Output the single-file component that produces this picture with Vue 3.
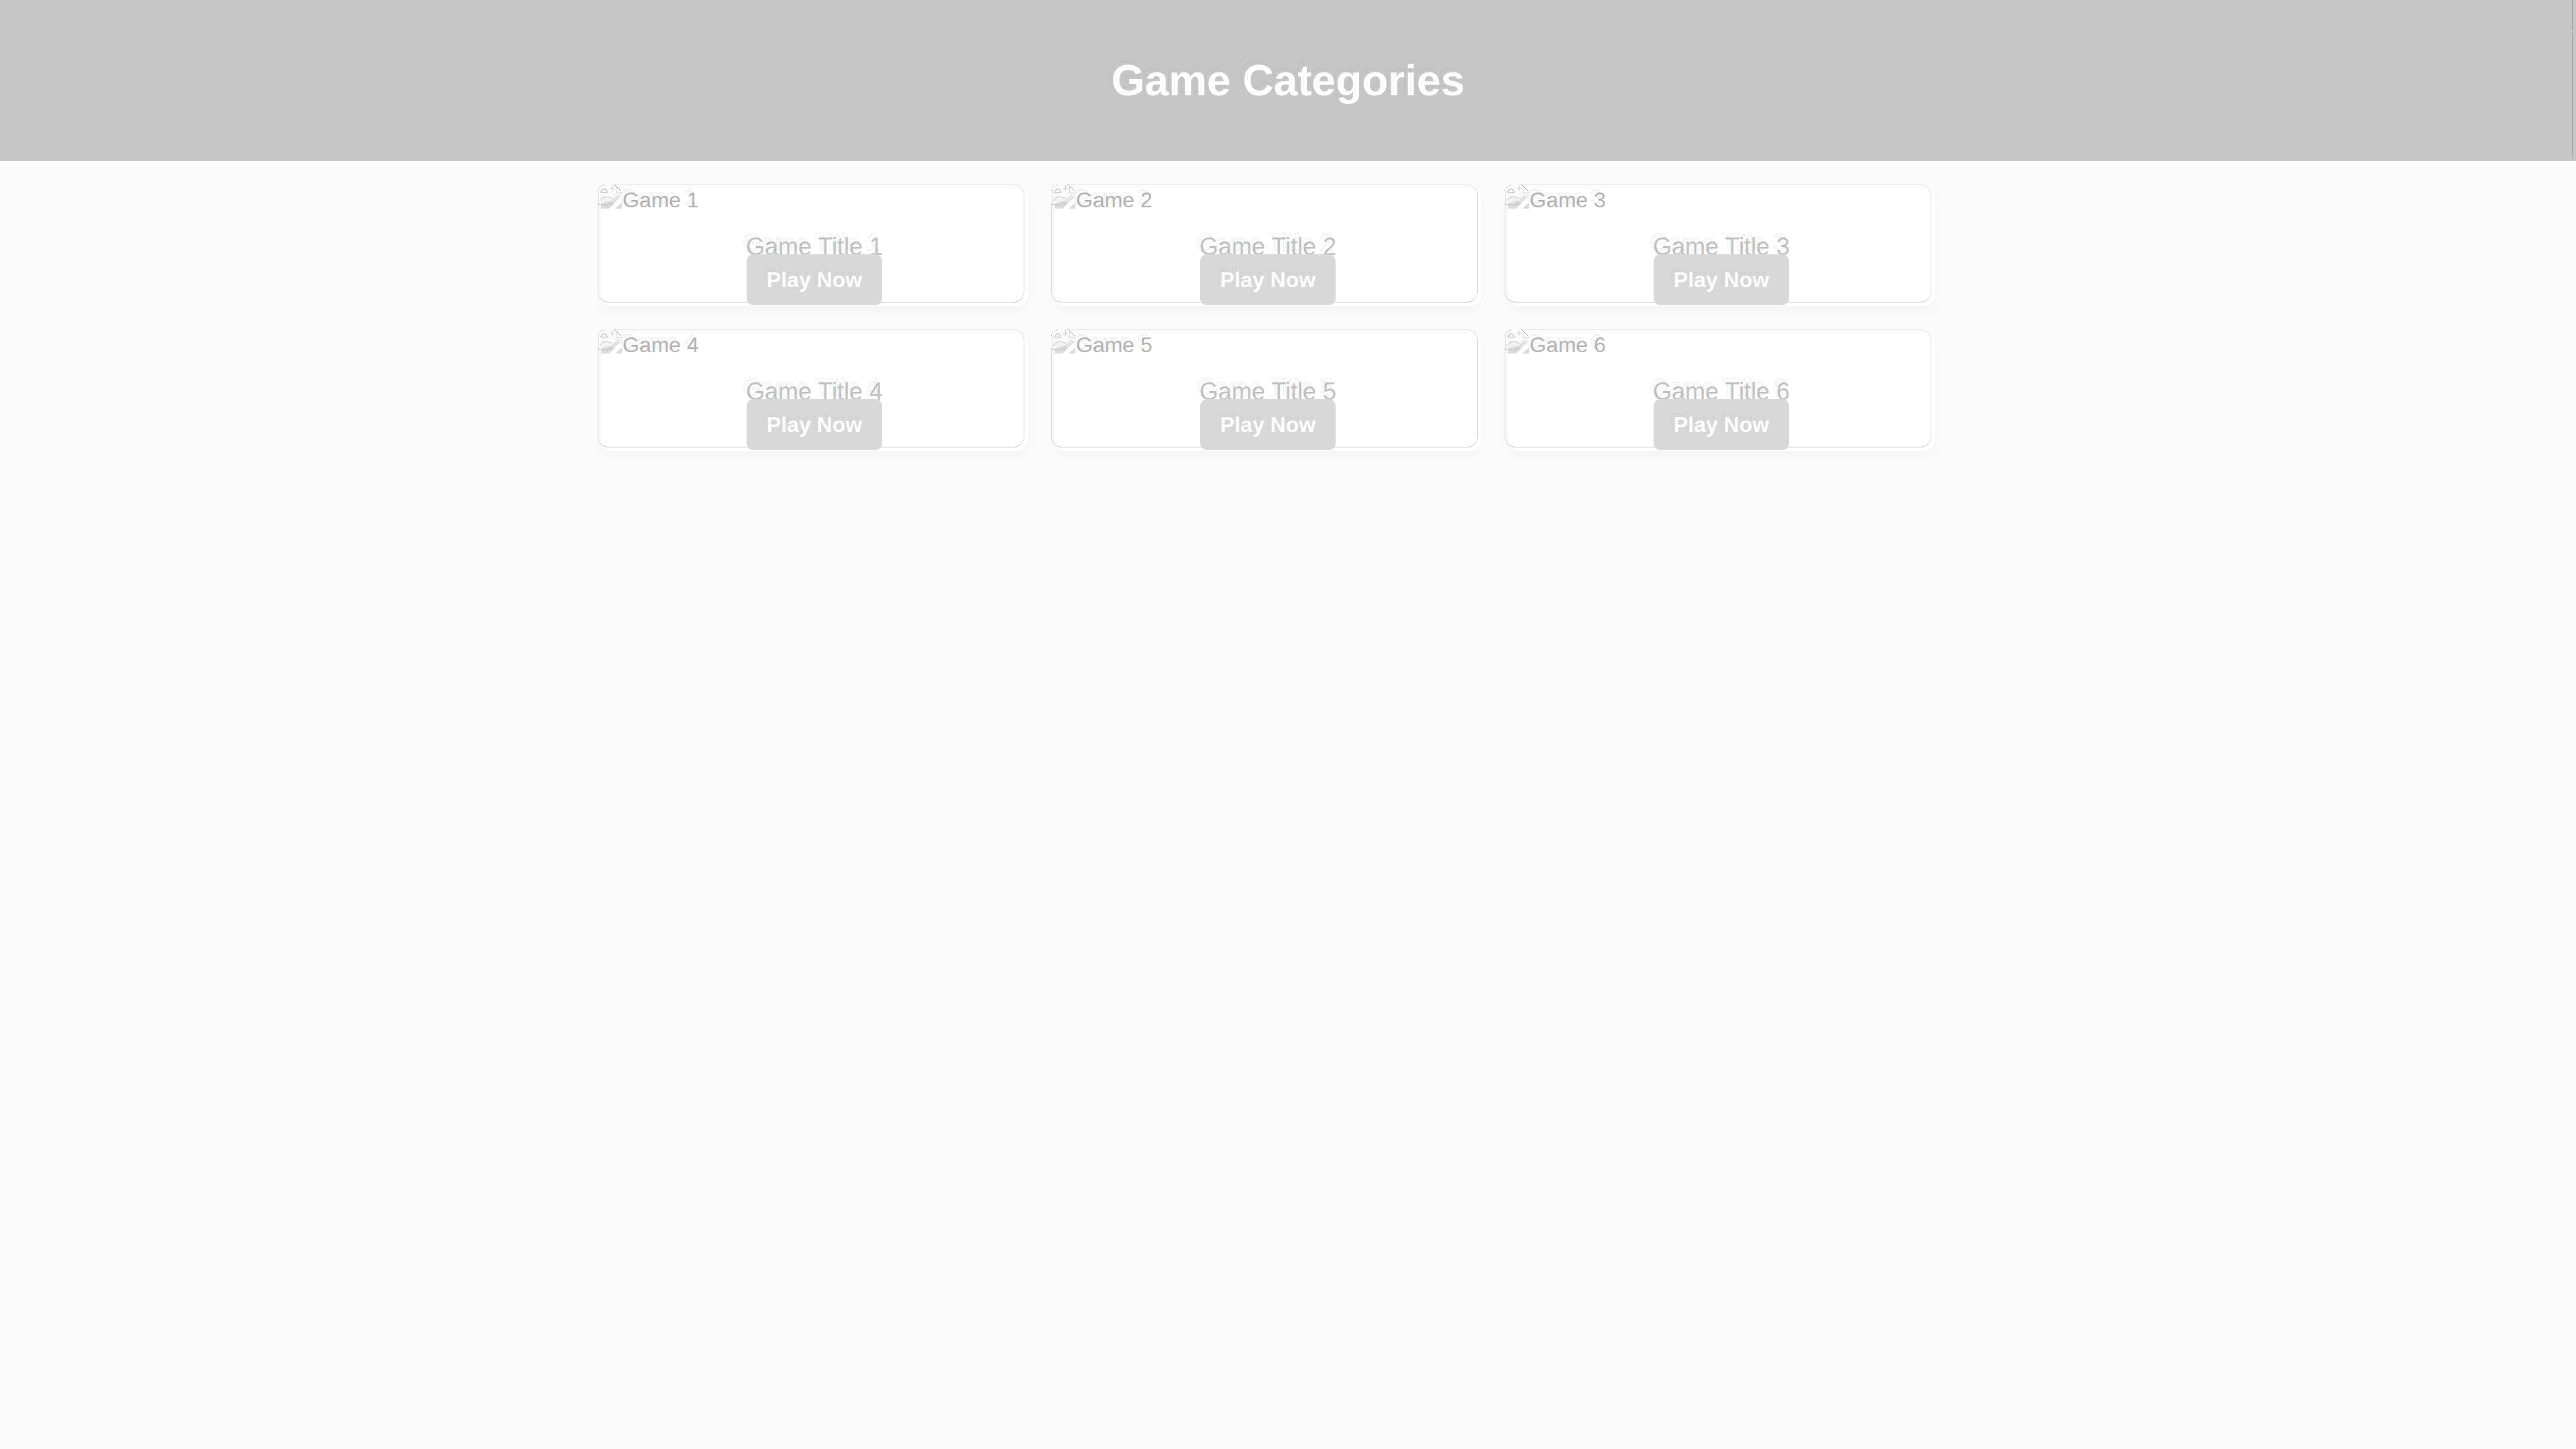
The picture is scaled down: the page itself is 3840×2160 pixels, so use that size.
<script setup>
const games = [1, 2, 3, 4, 5, 6].map((n) => ({
  id: n,
  alt: `Game ${n}`,
  title: `Game Title ${n}`
}))
</script>

<template>
  <div class="page">
    <header class="banner">
      <h1 class="echo" data-text="Game Categories">Game Categories</h1>
    </header>
    <main class="games">
      <article v-for="game in games" :key="game.id" class="card">
        <div class="picture">
          <svg class="broken" viewBox="0 0 38 38" aria-hidden="true">
            <defs>
              <linearGradient id="sky" x1="0" y1="0" x2="0" y2="1">
                <stop offset="0" stop-color="#fcfcfc" />
                <stop offset="1" stop-color="#ececec" />
              </linearGradient>
            </defs>
            <path d="M6 14Q7 7 14 6H26L37 17V21L21 37H6Z" fill="url(#sky)" />
            <path d="M12 20q0-4 5-4q2-4 5 0q4 0 4 4Z" fill="#fff" />
            <path d="M6 32Q12 25 20 26L27 30L20 37H6Z" fill="#dcdcdc" />
            <path d="M27 37L37 28V37Z" fill="#dadada" />
            <path d="M18 37L37 19V26L26 37Z" fill="#fff" />
            <g fill="none" stroke="#a8a8a8" stroke-width="1">
              <path d="M1.5 11Q2 3 12 1.5" stroke-dasharray="2 2" />
              <path d="M2.5 11V31" stroke="#d8d8d8" />
              <path d="M5.5 12.5H15.5Q14 7.5 10.5 7.5Q7 8 5.5 12.5" />
              <path d="M2 30.5H13" stroke-dasharray="3 1" />
              <path d="M4 25Q8 19.5 15 19.5Q20 19.5 23 23" stroke-dasharray="3 1" />
              <path d="M15 33L32 17M20 32L33 20" stroke-dasharray="3 1" />
              <path d="M22.5 2V11M19 6.5H26" stroke="#c4c4c4" />
              <path d="M25 0L36 11" stroke="#999" />
              <path d="M28.5 5V13.5H37" stroke="#d0d0d0" />
            </g>
          </svg>
          <span class="alt echo" :data-text="game.alt">{{ game.alt }}</span>
        </div>
        <div class="info">
          <div class="title"><span class="echo" :data-text="game.title">{{ game.title }}</span></div>
          <a class="play echo" href="#" data-text="Play Now">Play Now</a>
        </div>
      </article>
    </main>
  </div>
</template>

<style>
body {
  margin: 0;
  background: #fbfbfb;
}
</style>

<style scoped>
.page {
  min-height: 100vh;
  background: #fbfbfb;
  font-family: "Liberation Sans", Arial, sans-serif;
  font-size: 32px;
}

.banner {
  position: relative;
  display: flex;
  align-items: center;
  justify-content: center;
  padding: 83px 20px;
  background: #c6c6c6;
}

/* hairline near the right edge of the banner */
.banner::after {
  content: "";
  position: absolute;
  top: 0;
  right: 5px;
  bottom: 5px;
  width: 1px;
  background: linear-gradient(#999 45px, transparent 45px, transparent 49px, #999 49px);
}

h1 {
  margin: 0;
  color: #fff;
  font-size: 64px;
  line-height: 74px;
}

/* faint outline echoed up and to the left of each label */
.echo {
  position: relative;
}

.echo::before {
  content: attr(data-text);
  position: absolute;
  top: -5px;
  left: -5px;
  color: transparent;
  white-space: nowrap;
  -webkit-text-stroke: 1px rgba(0, 0, 0, 0.1);
}

h1.echo::before {
  -webkit-text-stroke-color: rgba(0, 0, 0, 0.06);
}

.games {
  display: grid;
  grid-template-columns: repeat(3, 1fr);
  gap: 40px;
  box-sizing: border-box;
  max-width: 2048px;
  margin: 0 auto;
  padding: 40px 60px 40px 0;
}

.card {
  position: relative;
  border-radius: 16px;
  background: #fff;
  box-shadow: 0 8px 16px rgba(0, 0, 0, 0.03);
}

.card::before {
  content: "";
  position: absolute;
  top: -5px;
  left: -5px;
  right: 5px;
  bottom: 5px;
  border: 1px solid #d8d8d8;
  border-top-color: #e4e4e4;
  border-bottom-color: #c9c9c9;
  border-radius: 16px;
}

.picture {
  position: relative;
  height: 36px;
  padding-left: 32px;
  color: #b2b2b2;
  line-height: 36px;
}

.broken {
  position: absolute;
  top: -6px;
  left: -6px;
  width: 38px;
  height: 38px;
  background: linear-gradient(#fbfbfb, #fbfbfb) 0 0 / 28px 6px no-repeat,
    linear-gradient(#fbfbfb, #fbfbfb) 0 0 / 6px 28px no-repeat;
}

.info {
  padding: 32px 20px 20px;
  text-align: center;
  line-height: 38px;
}

.title {
  margin-bottom: 10px;
  color: #c1c1c1;
  font-size: 36px;
  line-height: 40px;
}

.play {
  padding: 20px 30px;
  border-radius: 10px;
  background: #d8d8d8;
  color: #fff;
  font-weight: bold;
  text-decoration: none;
}

.play.echo::before {
  top: 14px;
  left: 25px;
  -webkit-text-stroke-color: rgba(0, 0, 0, 0.07);
}
</style>
